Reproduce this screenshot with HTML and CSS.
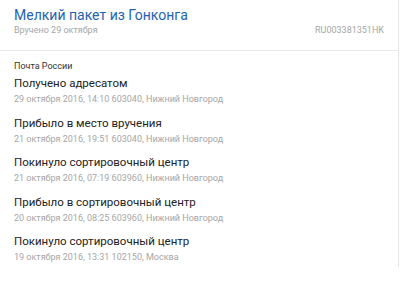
FILE: index.html
```html
<!DOCTYPE html>
<html lang="ru">
<head>
    <meta charset="UTF-8">
    <meta name="viewport" content="width=device-width, initial-scale=1.0">
    <title>Мелкий пакет из Гонконга</title>
    <link rel="stylesheet" href="styles.css">
</head>
<body>
    <div class="parcel">
        <div class="parcel-header">
            <h1>Мелкий пакет из Гонконга</h1>
            <div class="parcel-meta">
                <span>Вручено 29 октября</span>
                <span>RU003381351HK</span>
            </div>
        </div>

        <div class="history">
            <div class="carrier">Почта России</div>
            <div class="event">
                <div class="event-title">Получено адресатом</div>
                <div class="event-info">29 октября 2016, 14:10 603040, Нижний Новгород</div>
            </div>
            <div class="event">
                <div class="event-title">Прибыло в место вручения</div>
                <div class="event-info">21 октября 2016, 19:51 603040, Нижний Новгород</div>
            </div>
            <div class="event">
                <div class="event-title">Покинуло сортировочный центр</div>
                <div class="event-info">21 октября 2016, 07:19 603960, Нижний Новгород</div>
            </div>
            <div class="event">
                <div class="event-title">Прибыло в сортировочный центр</div>
                <div class="event-info">20 октября 2016, 08:25 603960, Нижний Новгород</div>
            </div>
            <div class="event">
                <div class="event-title">Покинуло сортировочный центр</div>
                <div class="event-info">19 октября 2016, 13:31 102150, Москва</div>
            </div>
        </div>
    </div>
</body>
</html>
```

FILE: styles.css
```css
body {
    font-family: Roboto, Arial, sans-serif;
    background: #fff;
    margin: 0;
    padding: 0;
    color: #222;
}

.parcel {
    width: 398px;
    height: 267px;
    border-right: 1px solid #e6e6e6;
}

.parcel-header {
    padding: 6px 14px 0 14px;
    height: 44px;
    border-bottom: 1px solid #ebebeb;
}

h1 {
    margin: 0;
    font-size: 14px;
    font-weight: 400;
    line-height: 18px;
    color: #1e63b4;
}

.parcel-meta {
    display: flex;
    justify-content: space-between;
    font-size: 9px;
    line-height: 13px;
    color: #a6a6a6;
}

.history {
    padding: 9px 14px 0 14px;
}

.carrier {
    font-size: 9px;
    line-height: 13px;
    color: #333;
    margin-bottom: 2px;
}

.event {
    margin-bottom: 8.5px;
}

.event-title {
    font-size: 11.5px;
    line-height: 17px;
}

.event-info {
    font-size: 9px;
    line-height: 14px;
    color: #a6a6a6;
}
```
